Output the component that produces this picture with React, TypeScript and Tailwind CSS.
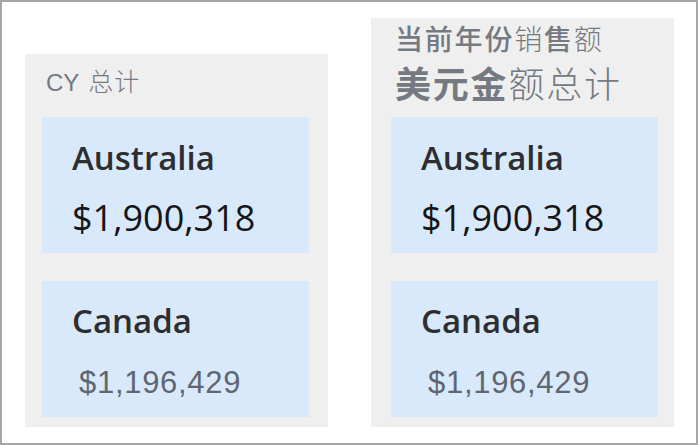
import React from "react";

const cjk = { fontFamily: '"Noto Sans CJK SC", "Noto Sans", sans-serif' };
const open = { fontFamily: '"Open Sans", "Noto Sans", sans-serif' };
const arial = { fontFamily: '"Liberation Sans", "Noto Sans CJK SC", sans-serif' };

function Card({ name, value, first }: { name: string; value: string; first: boolean }) {
  return (
    <div className={`w-[267px] h-[136px] bg-[#d9e9fc] pl-[30px] flex flex-col ${first ? "pt-[21px]" : "pt-[20px]"}`}>
      <div style={open} className="text-[33px] leading-[40px] font-semibold text-[#2e2e2e]">
        {name}
      </div>
      {first ? (
        <div style={open} className="mt-[20px] text-[36px] leading-[40px] font-normal text-[#161616]">
          {value}
        </div>
      ) : (
        <div style={arial} className="mt-[24px] ml-[7px] text-[31px] leading-[36px] tracking-[0.7px] text-[#5f6670]">
          {value}
        </div>
      )}
    </div>
  );
}

export default function App() {
  return (
    <div className="w-[698px] h-[445px] border-2 border-[#a6a6a6] bg-white flex items-end pl-[23px] pb-[16px] gap-[43px] box-border">
      <div className="w-[303px] h-[373px] bg-[#efefef] flex flex-col">
        <div className="mt-[12px] h-[28px] pl-[21px] flex items-baseline text-[#757a82] text-[24px] leading-[28px]" style={arial}>
          <span>CY</span>
          <span style={cjk} className="ml-[9px] font-light text-[25px] leading-[28px] tracking-[1px]">
            总计
          </span>
        </div>
        <div className="mt-[23px] ml-[17px] flex flex-col gap-[28px]">
          <Card name="Australia" value="$1,900,318" first />
          <Card name="Canada" value="$1,196,429" first={false} />
        </div>
      </div>
      <div className="w-[303px] h-[409px] bg-[#efefef] flex flex-col">
        <div className="pl-[24px] text-[#757a82] h-[99px]" style={cjk}>
          <div className="text-[28px] leading-[40px] tracking-[1.8px] whitespace-nowrap">
            <span className="font-medium">当前年份</span>
            <span className="font-light">销</span>
            <span className="font-medium">售</span>
            <span className="font-light">额</span>
          </div>
          <div className="text-[36px] leading-[48px] tracking-[1.8px] whitespace-nowrap">
            <span className="font-bold">美元金</span>
            <span className="font-light">额总计</span>
          </div>
        </div>
        <div className="ml-[20px] flex flex-col gap-[28px]">
          <Card name="Australia" value="$1,900,318" first />
          <Card name="Canada" value="$1,196,429" first={false} />
        </div>
      </div>
    </div>
  );
}
